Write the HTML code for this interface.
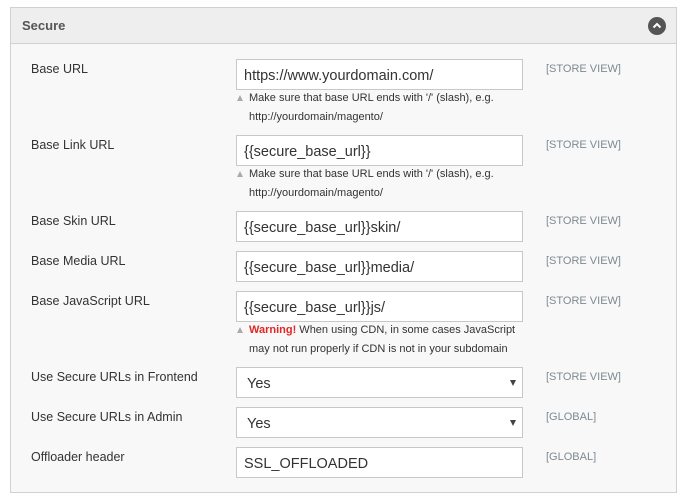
<!DOCTYPE html>
<html><head><style>
body{margin:0;width:686px;height:497px;background:#fff;font-family:"Liberation Sans",sans-serif;position:relative;overflow:hidden}
.panel{position:absolute;left:10px;top:7px;width:665px;height:484px;border:1px solid #d1d1d1;background:#f8f8f8}
.hdr{position:absolute;left:0;top:0;width:665px;height:35px;background:#eeeeee;border-bottom:1px solid #d1d1d1}
.hdr span{position:absolute;left:11px;top:10px;font-size:13px;font-weight:bold;color:#555}
.tog{position:absolute;left:637px;top:9px;width:18px;height:18px;border-radius:50%;background:#555}
.lab{position:absolute;left:31px;font-size:12.5px;color:#333}
.inp{position:absolute;left:236px;width:285px;height:29px;border:1px solid #c8c8c8;background:#fff;font-size:14.5px;color:#333;box-sizing:content-box}
.inp span{position:absolute;left:7px;top:7.5px}
.arr{position:absolute;right:6px;top:12px;width:0;height:0;border-left:3px solid transparent;border-right:3px solid transparent;border-top:6px solid #444}
.sc{position:absolute;left:546px;font-size:11px;color:#7d8a93}
.note{position:absolute;left:249px;font-size:11px;color:#333;line-height:19px;width:280px}
.tri{position:absolute;left:237px;width:0;height:0;border-left:3.5px solid transparent;border-right:3.5px solid transparent;border-bottom:6px solid #aaa}
</style></head><body>
<div class="panel"><div class="hdr"><span>Secure</span><div class="tog"><svg width="18" height="18"><path d="M5.5 10.5 L9 7 L12.5 10.5" stroke="#fff" stroke-width="2" fill="none"/></svg></div></div></div>

<div class="lab" style="top:62px">Base URL</div>
<div class="inp" style="top:59px"><span>https://www.yourdomain.com/</span></div>
<div class="sc" style="top:63px">[STORE VIEW]</div>
<div class="tri" style="top:95px"></div>
<div class="note" style="top:89px">Make sure that base URL ends with '/' (slash), e.g. http://yourdomain/magento/</div>

<div class="lab" style="top:138px">Base Link URL</div>
<div class="inp" style="top:135px"><span>{{secure_base_url}}</span></div>
<div class="sc" style="top:139px">[STORE VIEW]</div>
<div class="tri" style="top:171px"></div>
<div class="note" style="top:165px">Make sure that base URL ends with '/' (slash), e.g. http://yourdomain/magento/</div>

<div class="lab" style="top:214px">Base Skin URL</div>
<div class="inp" style="top:211px"><span>{{secure_base_url}}skin/</span></div>
<div class="sc" style="top:215px">[STORE VIEW]</div>

<div class="lab" style="top:254px">Base Media URL</div>
<div class="inp" style="top:251px"><span>{{secure_base_url}}media/</span></div>
<div class="sc" style="top:255px">[STORE VIEW]</div>

<div class="lab" style="top:294px">Base JavaScript URL</div>
<div class="inp" style="top:291px"><span>{{secure_base_url}}js/</span></div>
<div class="sc" style="top:295px">[STORE VIEW]</div>
<div class="tri" style="top:327px"></div>
<div class="note" style="top:321px"><b style="color:#e22626">Warning!</b> When using CDN, in some cases JavaScript may not run properly if CDN is not in your subdomain</div>

<div class="lab" style="top:370px">Use Secure URLs in Frontend</div>
<div class="inp" style="top:367px"><span style="left:10px">Yes</span><div class="arr"></div></div>
<div class="sc" style="top:371px">[STORE VIEW]</div>

<div class="lab" style="top:410px">Use Secure URLs in Admin</div>
<div class="inp" style="top:407px"><span style="left:10px">Yes</span><div class="arr"></div></div>
<div class="sc" style="top:411px">[GLOBAL]</div>

<div class="lab" style="top:450px">Offloader header</div>
<div class="inp" style="top:447px"><span>SSL_OFFLOADED</span></div>
<div class="sc" style="top:451px">[GLOBAL]</div>
</body></html>
